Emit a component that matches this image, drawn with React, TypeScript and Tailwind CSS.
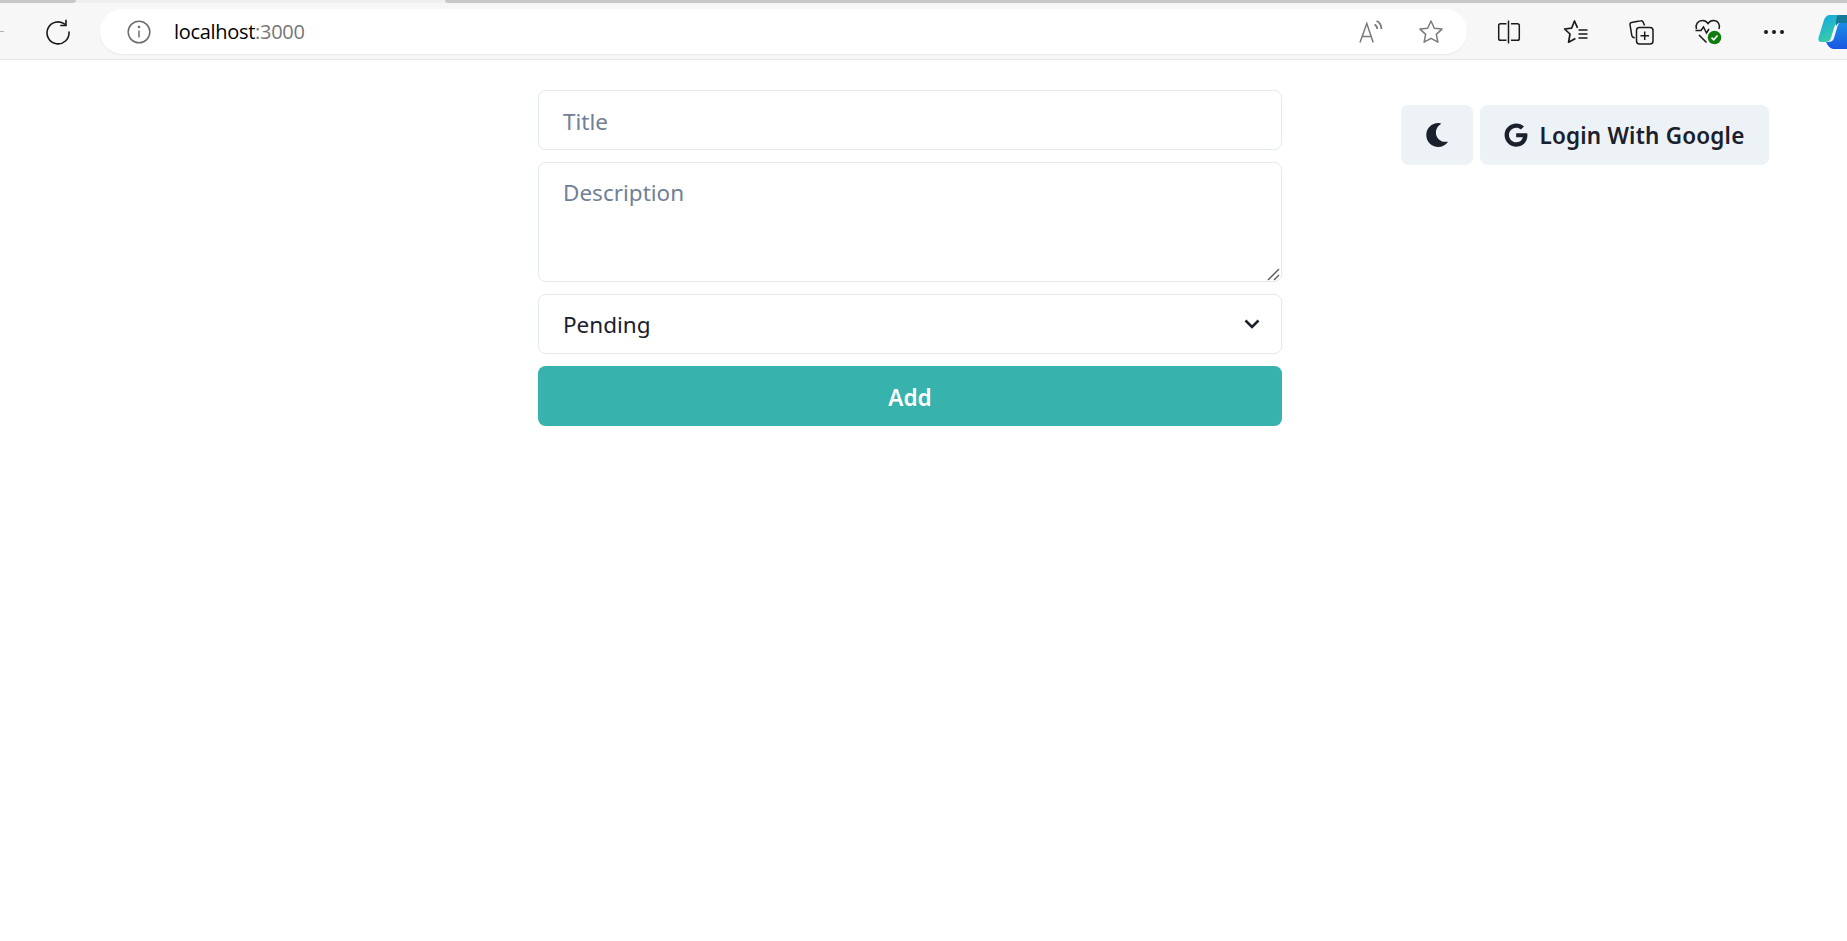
import { useId } from 'react';
import { FaGoogle, FaMoon } from 'react-icons/fa';

const FONT = "font-['Noto_Sans','Open_Sans',sans-serif]";

function RefreshIcon() {
  return (
    <svg width="26" height="26" viewBox="0 0 26 26" fill="none" stroke="#1a1a1a" strokeWidth="1.6">
      <path d="M19.800 5.200A11 11 0 1 0 24 13" strokeLinecap="round" />
      <path d="M21 0.800v5.700h-5.700" />
    </svg>
  );
}

function InfoIcon() {
  return (
    <svg width="24" height="24" viewBox="0 0 24 24" fill="none" stroke="#6e6e6e" strokeWidth="1.5">
      <circle cx="12" cy="12" r="10.800" />
      <path d="M12 10.500v7" />
      <circle cx="12" cy="7" r="0.600" fill="#6e6e6e" />
    </svg>
  );
}

function ReadAloudIcon() {
  return (
    <svg width="24" height="24" viewBox="0 0 24 24" fill="none" stroke="#7a7a7a" strokeWidth="1.500">
      <path d="M1 22.500 7.800 3.500l6.400 19M3.200 16.500h9" />
      <path d="M15.500 4.500c1.700.8 2.600 2.300 2.800 4.500M17.500 1c3 1.200 4.800 4 5 8" strokeWidth="1.800" />
    </svg>
  );
}

function StarIcon() {
  return (
    <svg width="26" height="26" viewBox="0 0 26 26" fill="none" stroke="#7a7a7a" strokeWidth="1.500" strokeLinejoin="round">
      <path d="M13 2l3.300 7.200 7.700.9-5.700 5.300 1.600 7.800L13 19.300l-6.900 3.900 1.600-7.800L2 10.100l7.700-.9z" />
    </svg>
  );
}

function SplitIcon() {
  return (
    <svg width="24" height="24" viewBox="0 0 24 24" fill="none" stroke="#1a1a1a" strokeWidth="1.500">
      <path d="M9.500 3.800H3.500a1.800 1.800 0 0 0-1.800 1.800v12.800a1.800 1.800 0 0 0 1.800 1.800h6" />
      <path d="M11.500 0.500v23" />
      <path d="M14 3.800h6.500a1.800 1.800 0 0 1 1.800 1.800v12.800a1.800 1.800 0 0 1-1.800 1.800H14" />
    </svg>
  );
}

function FavoritesIcon() {
  return (
    <svg width="26" height="26" viewBox="0 0 26 26" fill="none" stroke="#1a1a1a" strokeWidth="1.700" strokeLinejoin="round">
      <path d="M14.500 8.800 11.500 2 8.600 9.200 1.600 10l5.400 5-1.400 8.200 6.800-3.600" />
      <path d="M15.500 11h9M15.500 15h9M15.500 19h9" />
    </svg>
  );
}

function CollectionsIcon() {
  return (
    <svg width="26" height="26" viewBox="0 0 26 26" fill="none" stroke="#1a1a1a" strokeWidth="1.500">
      <path d="M16.500 6.500 15 2.800a1.800 1.800 0 0 0-2.200-1L3.500 3.500a1.800 1.800 0 0 0-1.500 2.100l1.800 10.800a3 3 0 0 0 3 2.400" />
      <rect x="8.500" y="8.500" width="16.500" height="16.500" rx="3" />
      <path d="M16.700 12.500v8.500M12.500 16.700H21" />
    </svg>
  );
}

function HealthIcon() {
  return (
    <svg width="28" height="28" viewBox="0 0 28 28" fill="none">
      <path
        d="M2.500 11C1 6.500 4 2.500 8.500 2.500c2.500 0 4.400 1.300 5.500 3 1.100-1.700 3-3 5.500-3 4.500 0 7 4 5.500 8.500M1.500 12.500h5.500l2.500-3.500 3 6 2.500-4M5 17l7.500 7.500"
        stroke="#1a1a1a"
        strokeWidth="1.500"
      />
      <circle cx="20.500" cy="19.500" r="6.800" fill="#107c10" />
      <path d="m17.500 19.700 2.200 2.100 3.800-4.300" stroke="#fff" strokeWidth="1.600" />
    </svg>
  );
}

function CopilotLogo() {
  const id = useId();
  return (
    <svg width="29" height="34" viewBox="0 0 29 34">
      <defs>
        <linearGradient id={`${id}a`} x1="0" y1="0" x2="0.600" y2="1">
          <stop offset="0" stopColor="#12a5e8" />
          <stop offset="1" stopColor="#3ed29a" />
        </linearGradient>
        <linearGradient id={`${id}b`} x1="0" y1="0" x2="0" y2="1">
          <stop offset="0" stopColor="#1b8ee8" />
          <stop offset="1" stopColor="#1a56e0" />
        </linearGradient>
      </defs>
      <path d="M12 0h14l3 2v6H22c-4 0-5 2-6 5l-3 10c-1 3-3 4-6 4H3c-2 0-3-2-2.600-4L6 5c1-3 3-5 6-5z" fill={`url(#${id}a)`} />
      <path d="M22 8h7v26H17c-4 0-6-1-9-7h2c3 0 5-1 6-4l3-10c.5-2 1.500-5 3-5z" fill={`url(#${id}b)`} />
      <path d="M21 0h8v8h-7c-2 0-3 1-4 3 0-5 0-11 3-11z" fill="#157a9c" />
    </svg>
  );
}

function BrowserBar() {
  return (
    <div className="h-[60px] bg-[#f7f7f7] border-b border-[#e6e6e6] relative">
      <div className="flex h-[3px] bg-[#f0f0f0]">
        <div className="w-[76px] bg-[#c8c8c8] rounded-br-sm" />
        <div className="ml-[369px] flex-1 bg-[#c8c8c8] rounded-bl-sm" />
      </div>
      <div className="flex items-center h-[45px] mt-[6px]">
        <div className="w-[4px] h-px bg-[#b0b0b0] mr-[41px]" />
        <RefreshIcon />
        <div className="ml-[29px] w-[1367px] h-[45px] shrink-0 rounded-[22px] bg-white flex items-center pl-[27px] pr-[23px] shadow-[0_1px_2px_rgba(0,0,0,0.06)]">
          <InfoIcon />
          <span className="ml-[23px] text-[20px] font-['Open_Sans',sans-serif] tracking-[-0.3px] text-black">
            localhost<span className="text-[#767676]">:3000</span>
          </span>
          <div className="ml-auto flex items-center gap-[35px]">
            <ReadAloudIcon />
            <StarIcon />
          </div>
        </div>
        <div className="ml-[30px] flex items-center">
          <SplitIcon />
          <div className="ml-[42px]"><FavoritesIcon /></div>
          <div className="ml-[39px]"><CollectionsIcon /></div>
          <div className="ml-[40px]"><HealthIcon /></div>
          <div className="ml-[42px] flex gap-[4px]">
            <span className="w-[4px] h-[4px] rounded-full bg-[#1a1a1a]" />
            <span className="w-[4px] h-[4px] rounded-full bg-[#1a1a1a]" />
            <span className="w-[4px] h-[4px] rounded-full bg-[#1a1a1a]" />
          </div>
        </div>
      </div>
      <div className="absolute right-0 top-[15px] w-[29px] overflow-hidden">
        <CopilotLogo />
      </div>
    </div>
  );
}

function AddForm() {
  return (
    <form className="w-[744px] flex flex-col gap-3 mt-[30px]">
      <input
        placeholder="Title"
        className="h-[60px] w-full rounded-[7.5px] border border-[#e2e8f0] px-6 pt-[2px] text-[22.5px] text-[#1a202c] placeholder:text-[#718096] outline-none"
      />
      <div className="relative">
        <textarea
          placeholder="Description"
          className="block h-[120px] w-full resize-none rounded-[7.5px] border border-[#e2e8f0] px-6 pt-[13px] text-[22.5px] text-[#1a202c] placeholder:text-[#718096] outline-none"
        />
        {/* the browser's own grip is smaller than the one in the shot */}
        <svg
          className="absolute right-[2px] bottom-[1px] pointer-events-none"
          width="13"
          height="13"
          viewBox="0 0 13 13"
          fill="none"
          stroke="#555"
          strokeWidth="1.300"
        >
          <path d="M1 12 12 1M7 12l5-5" />
        </svg>
      </div>
      <div className="relative">
        <select className="h-[60px] w-full appearance-none rounded-[7.5px] border border-[#e2e8f0] bg-white px-6 pt-[2px] text-[22.5px] text-[#1a202c] outline-none">
          <option>Pending</option>
          <option>Completed</option>
        </select>
        <svg
          className="absolute right-[22px] top-[25px] pointer-events-none"
          width="16"
          height="10"
          viewBox="0 0 16 10"
          fill="none"
          stroke="#1a202c"
          strokeWidth="2.500"
        >
          <path d="M1.500 1.500 8 8l6.500-6.500" />
        </svg>
      </div>
      <button type="button" className="h-[60px] w-full rounded-[7.5px] bg-[#38b2ac] pt-[4px] text-[22.5px] font-semibold text-white">
        Add
      </button>
    </form>
  );
}

export default function App() {
  return (
    <div className={`min-h-screen bg-white ${FONT}`}>
      <BrowserBar />
      <div className="flex items-start pl-[538px]">
        <AddForm />
        <div className="ml-[119px] mt-[45px] flex gap-[7px]">
          <button className="flex h-[60px] w-[72px] items-center justify-center rounded-[7.5px] bg-[#edf2f7] text-[#1a202c]">
            <FaMoon size={24} />
          </button>
          <button className="flex h-[60px] w-[289px] items-center justify-center gap-[11px] rounded-[7.5px] bg-[#edf2f7] text-[22.5px] tracking-[0.2px] font-semibold text-[#1a202c]">
            <FaGoogle size={24} />
            <span className="pt-[2px]">Login With Google</span>
          </button>
        </div>
      </div>
    </div>
  );
}
